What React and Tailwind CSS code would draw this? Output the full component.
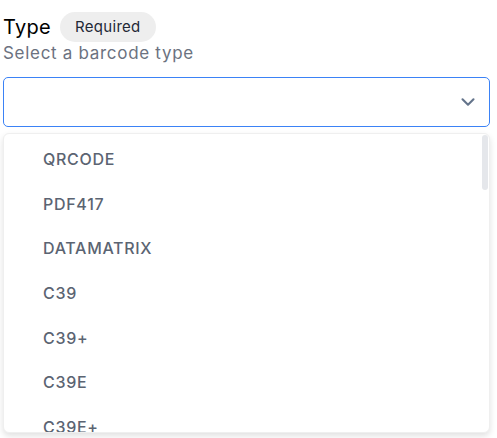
import { ChevronDown } from 'lucide-react';

const barcodeTypes = ['QRCODE', 'PDF417', 'DATAMATRIX', 'C39', 'C39+', 'C39E', 'C39E+'];

export default function App() {
  return (
    <div className="relative h-[438px] w-[497px] overflow-hidden bg-white font-['Inter',sans-serif]">
      <div className="px-[3px] pt-[12px]">
        <div className="flex items-center gap-[9px]">
          <span className="text-[20px] leading-[30px] tracking-[0.3px] text-black">Type</span>
          <span className="rounded-full bg-[#eeeeee] px-[15px] text-[15px] leading-[30px] tracking-[0.3px] text-[#1f2937]">
            Required
          </span>
        </div>
        <p className="text-[17px] leading-[22px] tracking-[0.7px] text-[#6b7280]">Select a barcode type</p>

        <div className="mt-[13px] flex h-[50px] w-[487px] items-center justify-end rounded-[5px] border border-[#3b82f6] pr-[10px]">
          <ChevronDown className="h-[22px] w-[22px] text-[#64748b]" strokeWidth={2.3} />
        </div>

        <div className="relative mt-[6px] h-[300px] w-[487px] overflow-hidden rounded-[6px] border border-[#efefef] bg-white shadow-[0_3px_6px_rgba(0,0,0,0.12)]">
          <ul className="pt-[3px]">
            {barcodeTypes.map((type) => (
              <li
                key={type}
                className="flex h-[44.6px] items-center pl-[39px] text-[16px] font-medium tracking-[0.7px] text-[#5b6472]">
                {type}
              </li>
            ))}
          </ul>
          <div className="absolute right-[1px] top-[1px] h-[55px] w-[6px] rounded-full bg-[#e5e7eb]" />
        </div>
      </div>
    </div>
  );
}
